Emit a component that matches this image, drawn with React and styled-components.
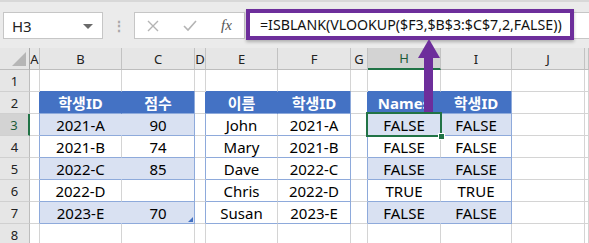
import React from 'react';
import styled, { createGlobalStyle } from 'styled-components';

const BLUE = '#4472c4';
const BAND = '#d9e1f2';
const LINE = '#8eaadb';
const GRID = '#d4d4d4';
const GREEN = '#217346';
const PURPLE = '#6d2e9b';

const GlobalStyle = createGlobalStyle`
  body {
    margin: 0;
    background: #fff;
    overflow: hidden;
    font-family: "Noto Sans", "Noto Sans CJK KR", sans-serif;
  }
`;

const COLS = ['A', 'B', 'C', 'D', 'E', 'F', 'G', 'H', 'I', 'J', 'K'];
const WIDTHS = '30px 10px 82px 73px 11px 72px 73px 17px 73px 71px 73px 1fr';

const DATA = {
  B: ['학생ID', '2021-A', '2021-B', '2022-C', '2022-D', '2023-E'],
  C: ['점수', '90', '74', '85', '', '70'],
  E: ['이름', 'John', 'Mary', 'Dave', 'Chris', 'Susan'],
  F: ['학생ID', '2021-A', '2021-B', '2022-C', '2022-D', '2023-E'],
  H: ['Names', 'FALSE', 'FALSE', 'FALSE', 'TRUE', 'FALSE'],
  I: ['학생ID', 'FALSE', 'FALSE', 'FALSE', 'TRUE', 'FALSE'],
};

const TABLES = [
  { cols: ['B', 'C'], band: true },
  { cols: ['E', 'F'], band: false },
  { cols: ['H', 'I'], band: true },
];

const Page = styled.div`
  position: relative;
  width: 589px;
  height: 243px;
  overflow: hidden;
`;

const TopBar = styled.div`
  box-sizing: border-box;
  height: 48px;
  display: flex;
  align-items: center;
  padding: 1px 0 0 3px;
  background: #ebebeb;
  border-top: 2px solid #d8d8d8;
`;

const NameBox = styled.div`
  box-sizing: border-box;
  position: relative;
  width: 100px;
  height: 27px;
  padding-left: 8px;
  display: flex;
  align-items: center;
  background: #fff;
  border: 1px solid #c6c6c6;
  font-size: 15px;
  color: #222;
`;

const Caret = styled.span`
  position: absolute;
  right: 9px;
  top: 11px;
  border-left: 5px solid transparent;
  border-right: 5px solid transparent;
  border-top: 5px solid #6a6a6a;
`;

const Dots = styled.div`
  width: 31px;
  display: flex;
  justify-content: center;
  color: #a8a8a8;
  font-size: 14px;
  font-weight: 700;
`;

const FxBox = styled.div`
  box-sizing: border-box;
  width: 111px;
  height: 27px;
  display: flex;
  align-items: center;
  gap: 24px;
  padding-left: 12px;
  background: #fff;
  border: 1px solid #c6c6c6;
`;

const Fx = styled.span`
  font-family: "Liberation Serif", serif;
  font-style: italic;
  font-size: 15px;
  color: #555;
`;

const FormulaField = styled.div`
  position: relative;
  box-sizing: border-box;
  flex: 1;
  height: 27px;
  margin-left: 1px;
  background: #fff;
  border: 1px solid #c6c6c6;
  border-right: none;
`;

const Callout = styled.div`
  position: absolute;
  left: -1px;
  top: -4px;
  box-sizing: border-box;
  width: 328px;
  height: 31px;
  padding-left: 10px;
  display: flex;
  align-items: center;
  border: 4px solid ${PURPLE};
  background: #fff;
  box-shadow: 0 2px 3px rgba(0, 0, 0, 0.25);
  font-size: 14.2px;
  color: #111;
  white-space: nowrap;
`;

const Sheet = styled.div`
  display: grid;
  grid-template-columns: ${WIDTHS};
  grid-auto-rows: 22px;
`;

const Corner = styled.div`
  box-sizing: border-box;
  display: flex;
  align-items: flex-end;
  justify-content: flex-end;
  padding: 0 3px 3px 0;
  background: #e6e6e6;
  border-right: 1px solid #a8a8a8;
  border-bottom: 1px solid #bdbdbd;
`;

const CornerMark = styled.div`
  width: 14px;
  height: 14px;
  background: #b6b6b6;
  clip-path: polygon(100% 0, 100% 100%, 0 100%);
`;

const ColHead = styled.div`
  box-sizing: border-box;
  display: flex;
  align-items: center;
  justify-content: center;
  background: ${(p) => (p.$active ? '#d3d3d3' : '#e6e6e6')};
  border-right: 1px solid #c2c2c2;
  border-bottom: ${(p) => (p.$active ? `2px solid ${GREEN}` : '1px solid #bdbdbd')};
  color: ${(p) => (p.$active ? '#1e5c3a' : '#222')};
  font-size: 13px;
  overflow: hidden;
`;

const RowHead = styled.div`
  box-sizing: border-box;
  display: flex;
  align-items: center;
  justify-content: center;
  background: ${(p) => (p.$active ? '#d3d3d3' : '#e6e6e6')};
  border-right: ${(p) => (p.$active ? `2px solid ${GREEN}` : '1px solid #bdbdbd')};
  border-bottom: 1px solid #d0d0d0;
  color: ${(p) => (p.$active ? '#1e5c3a' : '#222')};
  font-size: 13px;
`;

const Cell = styled.div`
  position: relative;
  box-sizing: border-box;
  display: flex;
  align-items: center;
  justify-content: center;
  background: ${(p) => p.$fill};
  border-right: 1px solid ${(p) => p.$r};
  border-bottom: 1px solid ${(p) => p.$b};
  color: ${(p) => (p.$head ? '#fff' : '#000')};
  font-weight: ${(p) => (p.$head ? 700 : 400)};
  font-size: 15px;
  white-space: nowrap;
  overflow: ${(p) => (p.$selected ? 'visible' : 'hidden')};
  z-index: ${(p) => (p.$selected ? 2 : 0)};
`;

const Selection = styled.div`
  position: absolute;
  left: -2px;
  top: -2px;
  right: -2px;
  bottom: -2px;
  border: 2px solid ${GREEN};
`;

const FillHandle = styled.div`
  position: absolute;
  right: -5px;
  bottom: -5px;
  width: 5px;
  height: 5px;
  background: ${GREEN};
  border: 1px solid #fff;
`;

const ResizeMark = styled.div`
  position: absolute;
  right: 1px;
  bottom: 1px;
  width: 5px;
  height: 5px;
  background: ${BLUE};
  clip-path: polygon(100% 0, 100% 100%, 0 100%);
`;

const Arrow = styled.svg`
  position: absolute;
  left: 0;
  top: 0;
  pointer-events: none;
  z-index: 5;
`;

const cellProps = (col, row) => {
  const idx = COLS.indexOf(col);
  const table = TABLES.find((t) => t.cols.includes(col));
  const inTable = table && row >= 2 && row <= 7;
  let fill = '#fff';
  if (inTable && row === 2) fill = BLUE;
  else if (inTable && table.band && row % 2 === 1) fill = BAND;

  let b = GRID;
  if (inTable) b = LINE;
  else if (table && row === 1) b = BLUE;

  let r = GRID;
  const next = COLS[idx + 1];
  const nextStartsTable = TABLES.some((t) => t.cols[0] === next);
  if (inTable) {
    r = col === table.cols[1] ? LINE : fill === '#fff' ? GRID : fill;
  } else if (nextStartsTable && row >= 2 && row <= 7) {
    r = row === 2 ? BLUE : LINE;
  }

  const text = inTable && DATA[col] ? DATA[col][row - 2] : '';
  return { fill, b, r, text, head: inTable && row === 2 };
};

const App = () => {
  const rows = [1, 2, 3, 4, 5, 6, 7, 8];
  return (
    <Page>
      <GlobalStyle />
      <TopBar>
        <NameBox>
          H3
          <Caret />
        </NameBox>
        <Dots>⋮</Dots>
        <FxBox>
          <svg width="12" height="12" viewBox="0 0 12 12">
            <path d="M1 1 L11 11 M11 1 L1 11" stroke="#b4b4b4" strokeWidth="1.4" fill="none" />
          </svg>
          <svg width="14" height="12" viewBox="0 0 14 12">
            <path d="M1 6 L5 10 L13 1" stroke="#b4b4b4" strokeWidth="1.6" fill="none" />
          </svg>
          <Fx>fx</Fx>
        </FxBox>
        <FormulaField>
          <Callout>=ISBLANK(VLOOKUP($F3,$B$3:$C$7,2,FALSE))</Callout>
        </FormulaField>
      </TopBar>
      <Sheet>
        <Corner>
          <CornerMark />
        </Corner>
        {COLS.map((c) => (
          <ColHead key={c} $active={c === 'H'}>
            {c === 'K' ? '' : c}
          </ColHead>
        ))}
        {rows.map((row) => (
          <React.Fragment key={row}>
            <RowHead $active={row === 3}>{row}</RowHead>
            {COLS.map((col) => {
              const p = cellProps(col, row);
              const selected = col === 'H' && row === 3;
              return (
                <Cell
                  key={col}
                  $fill={p.fill}
                  $r={p.r}
                  $b={p.b}
                  $head={p.head}
                  $selected={selected}
                >
                  {p.text}
                  {selected && (
                    <Selection>
                      <FillHandle />
                    </Selection>
                  )}
                  {col === 'C' && row === 7 && <ResizeMark />}
                </Cell>
              );
            })}
          </React.Fragment>
        ))}
      </Sheet>
      <Arrow width="589" height="243">
        <polygon points="429,39 440,58 418,58" fill={PURPLE} />
        <rect x="424" y="56" width="9" height="56" fill={PURPLE} />
      </Arrow>
    </Page>
  );
};

export default App;
